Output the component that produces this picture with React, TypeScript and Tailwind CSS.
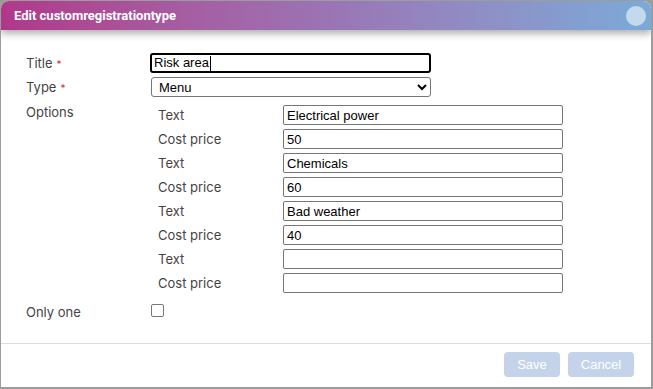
import React from 'react'

const OPTIONS = [
    { text: 'Electrical power', price: '50' },
    { text: 'Chemicals', price: '60' },
    { text: 'Bad weather', price: '40' },
    { text: '', price: '' },
]

const inputCls =
    "h-5 w-[280px] border border-[#767676] rounded-[2px] bg-white px-[3px] text-[13px] text-black font-['Liberation_Sans',Arial,sans-serif] outline-none"

function Label({ children, required }: { children: React.ReactNode; required?: boolean }) {
    return (
        <div className="w-[125px] shrink-0 pt-px text-[13px] text-[#444]">
            {children}
            {required && <span className="ml-1 align-middle text-[10px] text-[#e0282e]">*</span>}
        </div>
    )
}

export default function App() {
    return (
        <div className="h-[389px] w-[653px] bg-[#9c9c9c] pl-px pt-px font-['Inter',sans-serif]">
            <div className="flex h-[386px] w-[650px] flex-col overflow-hidden rounded-t-lg bg-white">
                {/* Header */}
                <div className="relative z-10 flex h-[29px] shrink-0 items-center justify-between bg-gradient-to-r from-[#b0378a] via-[#9a74b4] to-[#7aaad8] pl-[13px] pr-[5px] shadow-[0_4px_7px_rgba(0,0,0,0.3)]">
                    <span className="font-['Roboto',sans-serif] text-[13px] font-bold text-white">Edit customregistrationtype</span>
                    <span className="h-5 w-5 rounded-full bg-[#c3d9ee]" />
                </div>

                {/* Body */}
                <div className="flex flex-1 flex-col pl-[25px] pt-[23px]">
                    <div className="flex h-5 items-center">
                        <Label required>Title</Label>
                        <div className="-ml-px flex h-5 w-[281px] items-center rounded-[3px] border-2 border-black px-[2px] font-['Liberation_Sans',Arial,sans-serif] text-[13px] text-black">
                            Risk area<span className="ml-px h-[15px] w-px bg-black" />
                        </div>
                    </div>
                    <div className="mt-1 flex h-5 items-center">
                        <Label required>Type</Label>
                        <select
                            defaultValue="Menu"
                            className="h-5 w-[280px] rounded-[3px] border border-[#767676] bg-white pl-[3px] font-['Liberation_Sans',Arial,sans-serif] text-[13px] text-black"
                        >
                            <option>Menu</option>
                        </select>
                    </div>
                    <div className="mt-2 flex">
                        <div className="-mt-[3px]">
                            <Label>Options</Label>
                        </div>
                        <div className="flex flex-col gap-1 pl-[7px]">
                            {OPTIONS.map((o, i) => (
                                <React.Fragment key={i}>
                                    <div className="flex h-5 items-center">
                                        <span className="w-[125px] pt-[2px] text-[13px] text-[#444]">Text</span>
                                        <input className={inputCls} defaultValue={o.text} readOnly />
                                    </div>
                                    <div className="flex h-5 items-center">
                                        <span className="w-[125px] pt-[2px] text-[13px] text-[#444]">Cost price</span>
                                        <input className={inputCls} defaultValue={o.price} readOnly />
                                    </div>
                                </React.Fragment>
                            ))}
                        </div>
                    </div>
                    <div className="mt-[10px] flex h-4 items-center">
                        <div className="w-[125px] pt-[4px] text-[13px] text-[#444]">Only one</div>
                        <span className="-mt-[2px] h-[13px] w-[13px] rounded-[2px] border border-[#767676] bg-white" />
                    </div>
                </div>

                {/* Footer */}
                <div className="flex h-[44px] shrink-0 items-start justify-end gap-2 border-t border-[#dcdcdc] pr-[17px] pt-2">
                    <button className="h-[25px] w-[56px] rounded-[4px] bg-[#c4d3e9] font-['Liberation_Sans',Arial,sans-serif] text-[13px] text-white">Save</button>
                    <button className="h-[25px] w-[66px] rounded-[4px] bg-[#c4d3e9] font-['Liberation_Sans',Arial,sans-serif] text-[13px] text-white">Cancel</button>
                </div>
            </div>
        </div>
    )
}
